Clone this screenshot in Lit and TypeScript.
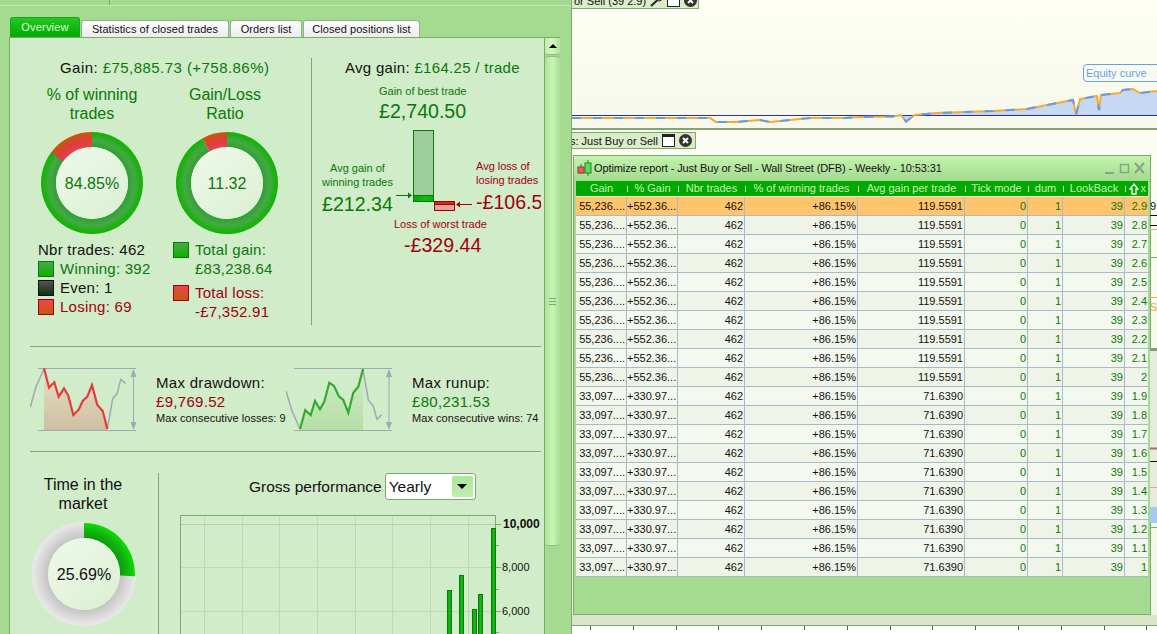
import { LitElement, html, css, svg } from "lit";
import { customElement } from "lit/decorators.js";

const HEAD = ["Gain", "% Gain", "Nbr trades", "% of winning trades", "Avg gain per trade", "Tick mode", "dum", "LookBack"];
const XS = ["2.9", "2.8", "2.7", "2.6", "2.5", "2.4", "2.3", "2.2", "2.1", "2", "1.9", "1.8", "1.7", "1.6", "1.5", "1.4", "1.3", "1.2", "1.1", "1"];

function arc(cx: number, cy: number, r0: number, r1: number, a0: number, a1: number) {
  const p = (r: number, a: number) => {
    const t = ((a - 90) * Math.PI) / 180;
    return `${(cx + r * Math.cos(t)).toFixed(2)} ${(cy + r * Math.sin(t)).toFixed(2)}`;
  };
  const large = a1 - a0 > 180 ? 1 : 0;
  return `M${p(r1, a0)}A${r1} ${r1} 0 ${large} 1 ${p(r1, a1)}L${p(r0, a1)}A${r0} ${r0} 0 ${large} 0 ${p(r0, a0)}Z`;
}

const defs = svg`
  <defs>
    <radialGradient id="gGreen" gradientUnits="userSpaceOnUse" cx="52" cy="52" r="51">
      <stop offset="0.7" stop-color="#2f9f35"/><stop offset="0.84" stop-color="#44a944"/>
      <stop offset="0.94" stop-color="#1fb015"/><stop offset="1" stop-color="#12b400"/>
    </radialGradient>
    <radialGradient id="gRed" gradientUnits="userSpaceOnUse" cx="52" cy="52" r="51">
      <stop offset="0.7" stop-color="#e8414c"/><stop offset="0.84" stop-color="#e03c40"/>
      <stop offset="1" stop-color="#c45a08"/>
    </radialGradient>
    <radialGradient id="gGray" gradientUnits="userSpaceOnUse" cx="52" cy="52" r="52">
      <stop offset="0.69" stop-color="#c4c4c4"/><stop offset="0.85" stop-color="#d8d8d8"/>
      <stop offset="1" stop-color="#eaeaea"/>
    </radialGradient>
    <radialGradient id="gBright" gradientUnits="userSpaceOnUse" cx="52" cy="52" r="51">
      <stop offset="0.7" stop-color="#0d9a0d"/><stop offset="0.85" stop-color="#0fb40f"/>
      <stop offset="1" stop-color="#10dc00"/>
    </radialGradient>
    <linearGradient id="gCentre" x1="0.1" y1="0" x2="0.9" y2="1">
      <stop offset="0" stop-color="#eef8ea"/><stop offset="1" stop-color="#dbf0d2"/>
    </linearGradient>
    <linearGradient id="gDown" x1="0" y1="0" x2="0" y2="1">
      <stop offset="0" stop-color="#e2e2c8"/><stop offset="1" stop-color="#cfbfa0"/>
    </linearGradient>
    <linearGradient id="gUp" x1="0" y1="0" x2="0" y2="1">
      <stop offset="0" stop-color="#d2ebc6"/><stop offset="1" stop-color="#b4e0a4"/>
    </linearGradient>
    <linearGradient id="gBar" x1="0" y1="0" x2="1" y2="0">
      <stop offset="0" stop-color="#0da00d"/><stop offset="0.6" stop-color="#14bb14"/><stop offset="1" stop-color="#0da80d"/>
    </linearGradient>
  </defs>`;

function donut(kind: "win" | "ratio" | "time", label: string, color: string) {
  const c = 52;
  let rings;
  if (kind === "time") {
    rings = svg`<path d="${arc(c, c, 36, 52, 92.5, 360)}" fill="url(#gGray)"/>
      <path d="${arc(c, c, 36, 51, 0, 92.5)}" fill="url(#gBright)"/>`;
  } else if (kind === "win") {
    rings = svg`<path d="${arc(c, c, 36, 51, 0, 306.3)}" fill="url(#gGreen)"/>
      <path d="${arc(c, c, 36, 51, 306.3, 307)}" fill="#20301c"/>
      <path d="${arc(c, c, 36, 51, 307, 360)}" fill="url(#gRed)"/>`;
  } else {
    rings = svg`<path d="${arc(c, c, 36, 51, 0, 331)}" fill="url(#gGreen)"/>
      <path d="${arc(c, c, 36, 51, 331, 360)}" fill="url(#gRed)"/>`;
  }
  return html`<svg class="donut" width="104" height="104" viewBox="0 0 104 104">
    ${defs}${rings}
    <circle cx="52" cy="52" r="36" fill="url(#gCentre)"/>
    <text x="52" y="58" text-anchor="middle" fill="${color}" class="dtext">${label}</text>
  </svg>`;
}

const swatch = (k: string) => html`<i class="sw ${k}"></i>`;

const EQUITY: number[][] = [
  [0, 118], [130, 118], [138, 118], [144, 122], [163, 122], [188, 120], [198, 122], [218, 120], [238, 118], [273, 118], [288, 117],
  [321, 116.5], [329, 115], [334, 121.5], [343, 115], [365, 113], [421, 111], [455, 109], [475, 105], [501, 100], [504, 115], [508, 99],
  [525, 96], [527, 110], [529, 95], [548, 93], [551, 90], [561, 89], [568, 93], [585, 91],
];

const DOWN = "14,2.3 19,21.7 24.3,16.3 28.7,30.7 34,22.3 38.3,29.7 43.3,49 48.7,43.7 52.7,35 57.3,30.7 62,19 67.3,39 72.7,45 77.3,63";
const UP = "14,63 19.3,44 24.7,49.3 29,35 34,43.3 38.3,35.7 43.3,16.7 48,20 52.7,30 57.3,34 62.3,46.7 67.3,26.7 72.3,20.7 77,3.3";

@customElement("app-root")
export class AppRoot extends LitElement {
  static styles = css`
    :host { display: block; width: 1157px; height: 634px; overflow: hidden; font-family: "Liberation Sans", Arial, sans-serif; color: #111; }
    .root { display: grid; grid-template-columns: 572px 585px; height: 634px; background: #a5db91; }
    .left { display: flex; flex-direction: column; height: 634px; overflow: hidden; border-right: 1px solid #7fa86f; box-sizing: border-box; position: relative; }
    .strip { height: 5px; display: flex; border-bottom: 1px solid #c9e6b8; flex: none; }
    .strip i { width: 109px; border-right: 1px solid #7fa86f; }
    .tabs { display: flex; align-items: flex-end; height: 20px; margin: 11px 0 0 10px; gap: 1px; flex: none; }
    .tab { font-size: 11px; height: 17px; line-height: 16px; text-align: center; box-sizing: border-box; background: linear-gradient(#ffffff, #ececec); border: 1px solid #8fb585; border-bottom: none; border-radius: 3px 3px 0 0; color: #111; letter-spacing: 0.05px; }
    .tab.on { height: 20px; line-height: 18px; background: linear-gradient(#25c825, #00aa00); color: #dcffd0; border-color: #17a617; letter-spacing: 0.2px; }
    .panel { display: flex; margin-left: 9px; width: 551px; flex: 1; min-height: 0; border: 1px solid #7fa86f; border-bottom: none; box-sizing: border-box; background: #d1ecc8; }
    .content { width: 534px; flex: none; overflow: hidden; }
    .bar { width: 15px; flex: none; background: #a5db91; border-left: 1px solid #7fa86f; display: flex; flex-direction: column; box-sizing: content-box; }
    .sbtn { height: 16px; flex: none; display: flex; align-items: center; justify-content: center; background: linear-gradient(90deg, #c0eeaa, #d4f7c2 50%, #b0e49c); border-bottom: 1px solid #8fb585; border-radius: 0 0 3px 3px; }
    .sbtn::before { content: ""; border: 4px solid transparent; border-top: none; border-bottom: 4px solid #000; }
    .thumb { height: 488px; margin-top: 1px; flex: none; background: linear-gradient(90deg, #aee39a, #ccf4b8 50%, #a8df94); border: 1px solid #93bb86; border-width: 1px 0; border-radius: 3px; display: flex; align-items: center; justify-content: center; }
    .grip { width: 7px; height: 5px; border-top: 1px solid #7fa86f; border-bottom: 1px solid #7fa86f; position: relative; }
    .grip::after { content: ""; position: absolute; left: 0; right: 0; top: 2px; height: 1px; background: #7fa86f; }

    .top { display: flex; height: 308px; }
    .lcol { width: 301px; flex: none; padding-top: 20px; box-sizing: border-box; }
    .vline { width: 1px; background: #7fa86f; margin-top: 20px; height: 267px; flex: none; }
    .rcol { flex: 1; position: relative; overflow: hidden; }
    .headline { font-size: 15px; line-height: 20px; letter-spacing: 0.45px; margin-left: 50px; white-space: nowrap; }
    .g { color: #0a780a; }
    .r { color: #a00010; }
    .donuts { display: grid; grid-template-columns: 164px 106px; margin-top: 7px; }
    .donuts > div { display: flex; flex-direction: column; align-items: center; }
    .dtitle { font-size: 16px; line-height: 19px; text-align: center; height: 38px; color: #0a780a; }
    .dtitle.sh { padding-right: 4px; }
    .donut { display: block; margin-top: 8px; }
    .dtext { font-size: 16px; font-family: "Liberation Sans", Arial, sans-serif; }
    .legend { display: grid; grid-template-columns: 135px 1fr; margin: 5px 0 0 28px; font-size: 15px; line-height: 19px; letter-spacing: 0.25px; }
    .lrow { display: flex; align-items: center; gap: 6px; height: 19px; white-space: nowrap; }
    .sw { width: 14px; height: 14px; border: 1px solid #333; display: block; flex: none; }
    .sw.gr { background: linear-gradient(#46aa46, #10b000); border-color: #0a780a; }
    .sw.bk { background: linear-gradient(#555, #103010); border-color: #111; }
    .sw.rd { background: linear-gradient(#ec4450, #c65a08); border-color: #a00010; }
    .total { display: flex; gap: 6px; height: 43px; }
    .total .sw { margin-top: 2px; }

    .hl { font-size: 15px; position: absolute; left: 33px; top: 20px; line-height: 20px; white-space: nowrap; letter-spacing: 0.3px; }
    .lab { position: absolute; font-size: 11px; line-height: 14px; white-space: nowrap; }
    .big { position: absolute; font-size: 19.6px; line-height: 24px; white-space: nowrap; }
    .big.clip { width: 65px; overflow: hidden; }
    .dia { position: absolute; left: 0; top: 0; }

    .hr { height: 1px; background: #7fa86f; margin-left: 20px; width: 511px; }
    .mid { display: flex; height: 104px; margin-left: 20px; }
    .mini { display: block; flex: none; margin-top: 19px; }
    .stat { font-size: 15px; line-height: 19px; letter-spacing: 0.3px; white-space: nowrap; padding-top: 26px; }
    .stat small { display: block; font-size: 11px; line-height: 13px; letter-spacing: 0.05px; margin-top: 1px; }
    .stat.a { width: 130px; margin-left: 20px; }
    .stat.b { margin-left: 20px; }

    .bottom { display: flex; height: 200px; }
    .tcol { width: 148px; flex: none; padding-top: 23px; box-sizing: border-box; display: flex; flex-direction: column; align-items: flex-start; }
    .ttitle { font-size: 16px; line-height: 19px; text-align: center; width: 146px; height: 38px; }
    .tcol .donut { margin: 9px 0 0 22px; }
    .vline2 { width: 1px; height: 170px; background: #7fa86f; margin-top: 21px; flex: none; }
    .gcol { flex: 1; position: relative; }
    .ghead { display: flex; align-items: center; gap: 3px; margin: 21px 0 0 90px; height: 27px; font-size: 15.5px; white-space: nowrap; }
    .sel { width: 91px; height: 27px; box-sizing: border-box; border: 1px solid #7fa86f; border-radius: 3px; background: #fff; display: flex; justify-content: space-between; align-items: center; padding: 0 2px 0 3px; }
    .selb { width: 21px; height: 21px; background: linear-gradient(#a8e898, #c4ecb0); display: flex; align-items: center; justify-content: center; border-radius: 2px; }
    .selb::before { content: ""; border: 5px solid transparent; border-bottom: none; border-top: 5px solid #000; }
    .plot { display: block; margin: 15px 0 0 21px; }
    .tick { font-family: "Liberation Sans", Arial, sans-serif; font-size: 11px; fill: #111; }
    .tick.b { font-size: 12px; font-weight: bold; }

    .right { position: relative; display: flex; flex-direction: column; height: 634px; overflow: hidden; background: #f2f6e6; }
    .chart { height: 128px; flex: none; position: relative; background: linear-gradient(#fffff6, #f5f8ea); border-bottom: 1px solid #7fa86f; box-sizing: content-box; }
    .chart svg.eq { position: absolute; left: 0; top: 0; }
    .ctab { position: absolute; left: 0; top: -8px; height: 17px; width: 127px; padding: 0 3px 0 2px; gap: 4px; display: flex; align-items: center; font-size: 11px; white-space: nowrap; background: #dbeccb; border: 1px solid #7fa86f; border-left: none; box-sizing: border-box; overflow: hidden; }
    .eqlab { position: absolute; left: 511px; top: 64px; width: 90px; height: 18px; border: 1px solid #6c9cf2; border-radius: 4px; box-sizing: border-box; background: #f8fbf0; color: #6c9cf2; font-size: 11px; line-height: 16px; padding-left: 2px; white-space: pre; }
    .lower { height: 486px; flex: none; display: flex; flex-direction: column; padding-top: 2px; box-sizing: border-box; border-top: 1px solid #7fa86f; background: linear-gradient(#fbfcf2, #f2f6e8); position: relative; }
    .tab2 { height: 17px; width: 124px; flex: none; display: flex; align-items: center; justify-content: flex-end; font-size: 11px; white-space: nowrap; background: #dbeccb; border: 1px solid #7fa86f; border-left: none; box-sizing: border-box; gap: 4px; overflow: hidden; padding-right: 3px; }
    .wicon { width: 13px; height: 13px; flex: none; display: block; }
    .win { width: 578px; height: 460px; margin: 6px 0 0 1px; flex: none; border: 1px solid #7fa86f; box-sizing: border-box; background: #a5db91; display: flex; flex-direction: column; }
    .wtitle { flex: none; background: linear-gradient(#c4f3ae, #a2dc8f); display: flex; align-items: center; font-size: 11px; white-space: nowrap; padding-left: 3px; letter-spacing: -0.1px; border-bottom: 1px solid #a5db91; box-sizing: content-box; height: 24px; }
    .wbtns { margin-left: auto; margin-right: 5px; display: block; }
    .table { margin-left: 2px; width: 572px; flex: none; }
    .thead, .trow { display: grid; grid-template-columns: 51px 51px 67px 113px 107px 63px 35px 62px 23px; }
    .thead { height: 16px; background: #00a800; color: #c8f5b0; font-size: 11px; line-height: 15px; border-bottom: 1px solid #e8f5e0; box-sizing: border-box; }
    .thead span { text-align: center; position: relative; white-space: nowrap; }
    .thead span + span::before { content: ""; position: absolute; left: 0; top: 5px; height: 6px; width: 1px; background: #d8f8c8; }
    .thead .xh { display: flex; justify-content: space-between; padding: 0 2px 0 4px; }
    .xh svg { margin-top: 1px; }
    .trow { height: 19px; font-size: 11px; line-height: 19px; color: #111; border-bottom: 1px solid #a9b9c6; box-sizing: border-box; background: #f4f9ef; }
    .trow:nth-child(odd) { background: #eff4e8; }
    .trow.sel1 { background: #ffc46c; }
    .trow span { text-align: right; padding-right: 1px; border-right: 1px solid #a9b9c6; overflow: hidden; white-space: nowrap; box-sizing: border-box; }
    .trow .g { color: #0a780a; }
    .trow span:last-child { border-right: none; }
    .foot { height: 10px; background: #d8e5c8; flex: none; border-bottom: 1px solid #7fa86f; box-sizing: content-box; }
    .axis { height: 8px; flex: 1; background: #fff; display: block; }
    .edge { position: absolute; left: 578px; top: 0; }
    .edge text { font-family: "Liberation Sans", Arial, sans-serif; font-size: 11px; }
    .ic { margin-left: auto; }
    .cnd { flex: none; }
  `;

  render() {
    const rows = XS.map((x, i) => {
      const hi = i < 10;
      return html`<div class="trow ${i === 0 ? "sel1" : ""}">
        <span>${hi ? "55,236...." : "33,097...."}</span>
        <span>${hi ? "+552.36..." : "+330.97..."}</span>
        <span>462</span><span>+86.15%</span>
        <span>${hi ? "119.5591" : "71.6390"}</span>
        <span class="g">0</span><span class="g">1</span><span class="g">39</span><span class="g">${x}</span>
      </div>`;
    });
    const eqLine = EQUITY.map(([x, y]) => `${x},${y}`).join(" ");
    const eqAbove = `${EQUITY.filter(([x]) => x >= 288).map(([x, y]) => `${x},${y}`).join(" ")} 585,115 288,115`;
    const closeIcon = html`<svg class="wicon" viewBox="0 0 13 13"><circle cx="6.5" cy="6.5" r="6.5" fill="#333"/><path d="M4 4l5 5M9 4l-5 5" stroke="#fff" stroke-width="2"/></svg>`;
    const winIcon = html`<svg class="wicon" viewBox="0 0 13 13"><rect x=".5" y=".5" width="12" height="12" fill="#fff" stroke="#222"/><rect x="0" y="0" width="13" height="3" fill="#222"/></svg>`;
    const hticks = [524, 545, 567, 589, 611, 632];
    return html`<div class="root">
      <div class="left">
        <div class="strip"><i></i></div>
        <div class="tabs">
          <div class="tab on" style="width:70px">Overview</div>
          <div class="tab" style="width:148px">Statistics of closed trades</div>
          <div class="tab" style="width:72px">Orders list</div>
          <div class="tab" style="width:117px">Closed positions list</div>
        </div>
        <div class="panel">
          <div class="content">
            <div class="top">
              <div class="lcol">
                <div class="headline">Gain: <span class="g">£75,885.73 (+758.86%)</span></div>
                <div class="donuts">
                  <div><div class="dtitle">% of winning<br />trades</div>${donut("win", "84.85%", "#0a780a")}</div>
                  <div><div class="dtitle sh">Gain/Loss<br />Ratio</div>${donut("ratio", "11.32", "#0a780a")}</div>
                </div>
                <div class="legend">
                  <div>
                    <div class="lrow">Nbr trades: 462</div>
                    <div class="lrow g">${swatch("gr")}Winning: 392</div>
                    <div class="lrow">${swatch("bk")}Even: 1</div>
                    <div class="lrow r">${swatch("rd")}Losing: 69</div>
                  </div>
                  <div>
                    <div class="total g">${swatch("gr")}<div>Total gain:<br />£83,238.64</div></div>
                    <div class="total r">${swatch("rd")}<div>Total loss:<br />-£7,352.91</div></div>
                  </div>
                </div>
              </div>
              <div class="vline"></div>
              <div class="rcol">
                <svg class="dia" width="232" height="308" viewBox="312 38 232 308">
                  <rect x="413.5" y="130.5" width="20" height="71" fill="#9dcf9d" stroke="#0a780a"/>
                  <rect x="413.5" y="195.5" width="20" height="6" fill="url(#gBar)" stroke="#0a780a"/>
                  <rect x="434.5" y="201.5" width="20" height="9" fill="#e2a2a2" stroke="#a80000"/>
                  <rect x="434.5" y="201.5" width="20" height="3" fill="#c8301c" stroke="#a80000"/>
                  <path d="M396 195.5H411" stroke="#0a780a"/><path d="M412 195.5l-4-3v6z" fill="#0a780a"/>
                  <path d="M458 204.5H472" stroke="#a80000"/><path d="M456 204.5l4-3v6z" fill="#a80000"/>
                </svg>
                <div class="hl">Avg gain: <span class="g">£164.25 / trade</span></div>
                <div class="lab g" style="left:67px;top:46px">Gain of best trade</div>
                <div class="big g" style="left:67px;top:61px">£2,740.50</div>
                <div class="lab g" style="left:10px;top:123px;text-align:center">Avg gain of<br />winning trades</div>
                <div class="big g" style="left:10px;top:154px">£212.34</div>
                <div class="lab r" style="left:164px;top:121px">Avg loss of<br />losing trades</div>
                <div class="big r clip" style="left:164px;top:152px">-£106.56</div>
                <div class="lab r" style="left:82px;top:179px">Loss of worst trade</div>
                <div class="big r" style="left:92px;top:195px">-£329.44</div>
              </div>
            </div>
            <div class="hr"></div>
            <div class="mid">
              <svg class="mini" width="106" height="68" viewBox="0 0 106 68">
                <polygon points="${DOWN} 77.3,64 14,64" fill="url(#gDown)"/>
                <path d="M8 2.5H106M8 64.5H106" stroke="#9caab5"/>
                <polyline points="0.3,41 6,20.7 14,3" fill="none" stroke="#9caab5" stroke-width="1.5"/>
                <polyline points="77.3,63 82.7,32.7 87.3,27.3 90.7,13.3 95.7,17.3" fill="none" stroke="#9caab5" stroke-width="1.5"/>
                <polyline points="${DOWN}" fill="none" stroke="#e83a3a" stroke-width="2.2"/>
                <path d="M103.5 4V62" stroke="#9caab5"/><path d="M103.5 3l-3 8h6zM103.5 64l-3-8h6z" fill="#9caab5"/>
              </svg>
              <div class="stat a">Max drawdown:<br /><span class="r">£9,769.52</span><small>Max consecutive losses: 9</small></div>
              <svg class="mini" width="106" height="68" viewBox="0 0 106 68">
                <polygon points="${UP} 77,64 14,64" fill="url(#gUp)"/>
                <path d="M8 2.5H106M8 64.5H106" stroke="#9caab5"/>
                <polyline points="0,25 6,45 14,63" fill="none" stroke="#9caab5" stroke-width="1.5"/>
                <polyline points="77,3.3 82.3,34 87.3,40 91,53.3 95.7,48.7" fill="none" stroke="#9caab5" stroke-width="1.5"/>
                <polyline points="${UP}" fill="none" stroke="#30ab30" stroke-width="2.2"/>
                <path d="M103 4V62" stroke="#9caab5"/><path d="M103 3l-3 8h6zM103 64l-3-8h6z" fill="#9caab5"/>
              </svg>
              <div class="stat b">Max runup:<br /><span class="g">£80,231.53</span><small>Max consecutive wins: 74</small></div>
            </div>
            <div class="hr"></div>
            <div class="bottom">
              <div class="tcol">
                <div class="ttitle">Time in the<br />market</div>
                ${donut("time", "25.69%", "#111")}
              </div>
              <div class="vline2"></div>
              <div class="gcol">
                <div class="ghead">Gross performance
                  <div class="sel">Yearly<i class="selb"></i></div>
                </div>
                <svg class="plot" width="365" height="120" viewBox="180 515 365 120">
                  <g stroke="#bfd9b4" fill="none">
                    ${[204, 242, 279, 317, 355, 392, 430, 468].map((x) => svg`<path d="M${x + 0.5} 515V634"/>`)}
                    <path d="M180 567.5H496M180 611.5H496"/>
                  </g>
                  <path d="M181 524.5H496" stroke="#c0c8b8"/>
                  <path d="M180.5 634V515.5H495.5V634" fill="none" stroke="#7fa86f"/>
                  ${[[447, 590], [459, 575], [472, 609], [478, 594], [491, 528]].map(([x, y]) => svg`<rect x="${x + 0.5}" y="${y + 0.5}" width="4" height="${634 - y}" fill="url(#gBar)" stroke="#0a7a0a"/>`)}
                  ${hticks.map((y, i) => svg`<path d="M496 ${y + 0.5}H${i % 2 === 0 ? 501 : 499}" stroke="#7fa86f"/>`)}
                  <text class="tick b" x="503" y="528">10,000</text>
                  <text class="tick" x="502" y="571">8,000</text>
                  <text class="tick" x="502" y="615">6,000</text>
                </svg>
              </div>
            </div>
          </div>
          <div class="bar">
            <div class="sbtn"></div>
            <div class="thumb"><i class="grip"></i></div>
          </div>
        </div>
      </div>
      <div class="right">
        <div class="chart">
          <svg class="eq" width="585" height="128" viewBox="0 0 585 128">
            <polygon points="${eqAbove}" fill="#c5d8f4"/>
            <path d="M0 115.5H585" stroke="#2a2ac8"/>
            <polyline points="${eqLine}" fill="none" stroke="#f5aa35" stroke-width="2"/>
            <polyline points="${eqLine}" fill="none" stroke="#5f9cf0" stroke-width="2" stroke-dasharray="9 12"/>
          </svg>
          <div class="ctab">or Sell (39 2.9)
            <svg class="wicon ic" viewBox="0 0 13 13"><circle cx="9" cy="4" r="3" fill="none" stroke="#222"/><path d="M7 6.5L1 12" stroke="#222" stroke-width="2"/></svg>
            ${winIcon}${closeIcon}
          </div>
          <div class="eqlab">Equity curve   :</div>
        </div>
        <div class="lower">
          <div class="tab2"><span>s: Just Buy or Sell</span>${winIcon}${closeIcon}</div>
          <div class="win">
            <div class="wtitle">
              <svg class="cnd" width="17" height="16" viewBox="0 0 17 16"><path d="M4 4V14M11 0V16" stroke="#2a7a2a"/><rect x="1" y="7" width="6" height="6" fill="#e8606a" stroke="#a03030"/><rect x="8" y="3" width="6" height="10" fill="#5ed85e" stroke="#1a8a1a"/></svg>
              Optimize report - Just Buy or Sell - Wall Street (DFB) - Weekly - 10:53:31
              <svg class="wbtns" width="40" height="14" viewBox="0 0 40 14"><path d="M0 12H9" stroke="#8aa384" stroke-width="2"/><rect x="15.5" y="3.5" width="8" height="8" fill="none" stroke="#8aa384" stroke-width="1.5"/><path d="M30 2L39 12M39 2L30 12" stroke="#8aa384" stroke-width="2"/></svg>
            </div>
            <div class="table">
              <div class="thead">
                ${HEAD.map((h) => html`<span>${h}</span>`)}
                <span class="xh"><svg width="10" height="14" viewBox="0 0 10 14"><path d="M5 2L9 7H7V12H3V7H1Z" fill="none" stroke="#fff" stroke-width="1.3"/></svg>x</span>
              </div>
              ${rows}
            </div>
          </div>
          <svg class="edge" width="7" height="480" viewBox="0 0 7 480" aria-hidden="true">
            <rect x="0" y="220" width="7" height="160" fill="#e6ecd9"/>
            <text x="0" y="80" fill="#111">9</text>
            <path d="M0 85.5H7M0 95.5H7" stroke="#111"/>
            <path d="M0 99.5H7" stroke="#eba0a0"/>
            <path d="M0 127.5H7" stroke="#7fa86f"/>
            <path d="M0 167.5H7" stroke="#f5aa35"/>
            <text x="0" y="181" fill="#f5aa35">S</text>
            <path d="M0 219.5H7" stroke="#8a9a80" stroke-width="3"/>
            <path d="M0 318.5H7" stroke="#a07060" stroke-width="2"/>
            <path d="M0 331.5H7" stroke="#111"/>
            <path d="M0 357.5H7" stroke="#eba0a0"/>
            <rect x="0" y="377" width="7" height="16" fill="#a9c8f0"/>
            <path d="M0 397.5H7" stroke="#7fa86f"/>
          </svg>
        </div>
        <div class="foot"></div>
        <svg class="axis" width="585" height="8" viewBox="0 0 585 8">
          ${Array.from({ length: 14 }, (_, i) => svg`<path d="M${18 + Math.round(i * 42.8) + 0.5} 0V4" stroke="#555"/>`)}
        </svg>
      </div>
    </div>`;
  }
}
